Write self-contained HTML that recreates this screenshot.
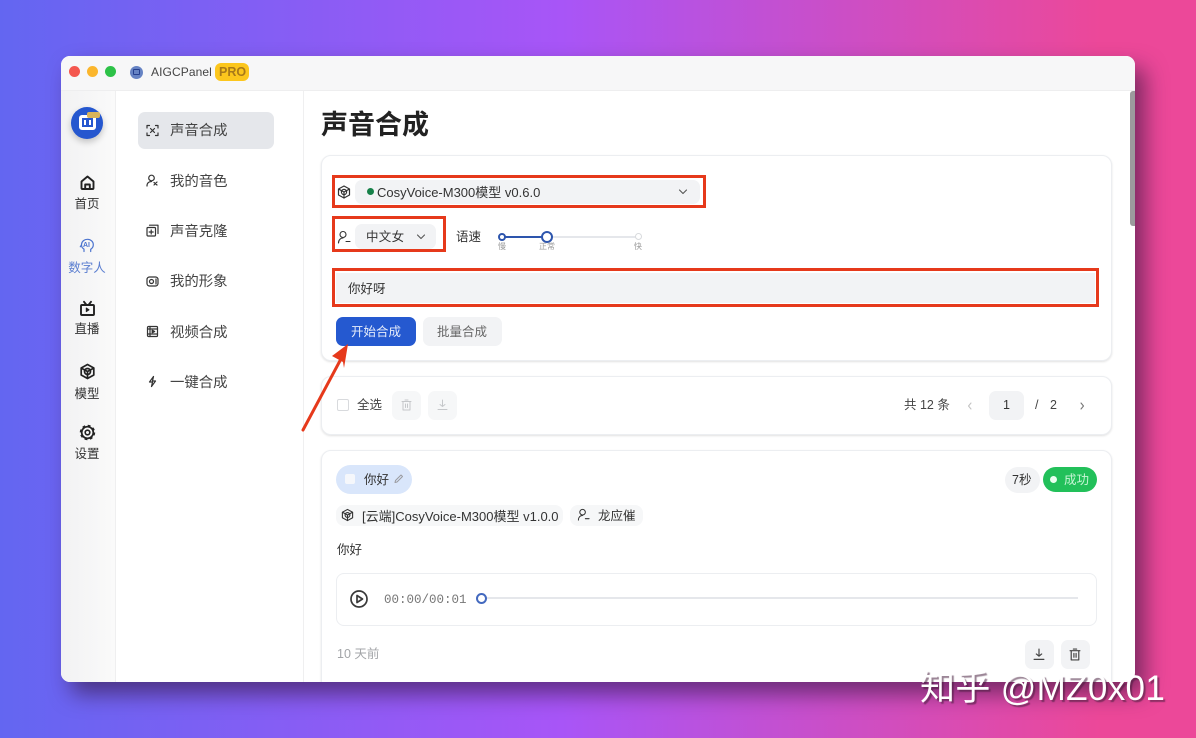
<!DOCTYPE html>
<html lang="zh">
<head>
<meta charset="utf-8">
<style>
*{box-sizing:border-box;margin:0;padding:0}
html,body{width:1196px;height:738px;overflow:hidden}
body{position:relative;background:linear-gradient(90deg,#6366f1 0%,#a855f7 47%,#ec4899 92%,#ec4899 100%);font-family:"Liberation Sans","Noto Sans CJK SC",sans-serif;color:#333}
.a{position:absolute}
.t{position:absolute;white-space:nowrap;line-height:1}
#win{left:61px;top:56px;width:1074px;height:626px;background:#fff;border-radius:9px;box-shadow:10px 12px 22px rgba(50,20,60,.6)}
#stage{left:0;top:0;width:1196px;height:738px;clip-path:inset(56px 61px 56px 61px round 9px)}
.card{position:absolute;background:#fff;border:1px solid #eceef1;border-radius:10px;box-shadow:0 1px 2px rgba(0,0,0,.12)}
.ic{position:absolute;fill:none;stroke:#333;stroke-width:1.5;stroke-linecap:round;stroke-linejoin:round}
.nav{font-size:12.5px;color:#333;text-align:center;width:55px;left:60px}
.menu{font-size:14.4px;color:#444;left:170px}
.rb{position:absolute;border:3.5px solid #e6391b;background:transparent}
.g{position:absolute;background:#f2f3f5;border-radius:7px}
</style>
</head>
<body>
<div class="a" id="win"></div>
<div class="a" id="stage">

<!-- title bar -->
<div class="a" style="left:61px;top:56px;width:1074px;height:35px;background:#f7f7f8;border-bottom:1px solid #eeeeef"></div>
<div class="a" style="left:69px;top:66px;width:11px;height:11px;border-radius:50%;background:#f4574f"></div>
<div class="a" style="left:87px;top:66px;width:11px;height:11px;border-radius:50%;background:#fbb62d"></div>
<div class="a" style="left:105px;top:66px;width:11px;height:11px;border-radius:50%;background:#2dc248"></div>
<div class="a" style="left:130px;top:66px;width:13px;height:13px;border-radius:50%;background:#6683c4"></div>
<div class="a" style="left:133px;top:69px;width:7px;height:6px;border-radius:1px;border:1px solid #26408f"></div>
<div class="t" style="left:151px;top:66px;font-size:12px;color:#444;letter-spacing:.1px">AIGCPanel</div>
<div class="a" style="left:215px;top:63px;width:34px;height:18px;border-radius:6px;background:#fcc61d"></div>
<div class="t" style="left:219px;top:66px;font-size:12.5px;font-weight:bold;color:#a8791a">PRO</div>

<!-- left rail -->
<div class="a" style="left:61px;top:91px;width:55px;height:591px;background:linear-gradient(90deg,#f2f2f3,#fafafa);border-right:1px solid #efeff0"></div>
<div class="a" style="left:71px;top:107px;width:32px;height:32px;border-radius:50%;background:#2557cf;box-shadow:0 3px 7px rgba(0,0,0,.22)"></div>
<div class="a" style="left:79px;top:115px;width:17px;height:15px;border-radius:3px;border:3px solid #fff"></div>
<div class="a" style="left:84px;top:120px;width:2px;height:5px;background:#fff"></div>
<div class="a" style="left:89px;top:120px;width:2px;height:5px;background:#fff"></div>
<div class="a" style="left:87px;top:112px;width:13px;height:6px;border-radius:2px;background:#d9b45a"></div>

<svg class="ic" style="left:79px;top:174px;stroke-width:1.9;stroke:#222" width="17" height="17" viewBox="0 0 17 17"><path d="M2.500 7.500 8.500 2.500l6 5V14a1 1 0 0 1-1 1h-10a1 1 0 0 1-1-1z"/><path d="M6.200 15v-4.500h4.600V15"/></svg>
<div class="t nav" style="top:198px;left:59.5px">首页</div>

<svg class="ic" style="left:79px;top:237px;stroke:#4c74cf;stroke-width:1.2" width="17" height="17" viewBox="0 0 17 17"><path d="M5 14.500v-2.400C3.200 11 2.300 9.300 2.500 7.300 2.900 4.200 5.400 2.300 8.500 2.300c3.200 0 5.800 2.300 5.800 5.500 0 2.100-1 3.500-2.600 4.500v2.200"/><path d="M2.500 8 1.300 9.700"/></svg>
<div class="t" style="left:83px;top:242px;font-size:7px;font-weight:bold;color:#4c74cf">AI</div>
<div class="t nav" style="top:262px;color:#5b7ed0;left:59.5px">数字人</div>

<svg class="ic" style="left:79px;top:300px;stroke-width:1.9;stroke:#222" width="17" height="17" viewBox="0 0 17 17"><rect x="2" y="5" width="13" height="10" rx="1"/><path d="M5 1.800 7.500 5M12 1.800 9.500 5"/><path d="M7.300 8l2.700 1.800-2.700 1.800z" fill="#222" stroke-width="1"/></svg>
<div class="t nav" style="top:323px;left:59.5px">直播</div>

<svg class="ic" style="left:79px;top:363px;stroke-width:1.7;stroke:#222" width="17" height="17" viewBox="0 0 17 17"><path d="M8.500 1.500 14.800 5v7l-6.300 3.500L2.200 12V5z"/><path d="M8.500 8.500V15.300M8.500 8.500 2.500 5.200M8.500 8.500l6-3.300"/><circle cx="8.500" cy="8.500" r="3"/></svg>
<div class="t nav" style="top:388px;left:59.5px">模型</div>

<svg class="ic" style="left:79px;top:424px;stroke:#222" width="17" height="17" viewBox="0 0 17 17"><circle cx="8.500" cy="8.500" r="5.800" stroke-width="1.7"/><circle cx="8.500" cy="8.500" r="6.800" stroke-width="1.800" stroke-dasharray="2.800 2.540" stroke-linecap="butt"/><circle cx="8.500" cy="8.500" r="2.300" stroke-width="1.600"/></svg>
<div class="t nav" style="top:448px;left:59.5px">设置</div>

<!-- second menu -->
<div class="a" style="left:116px;top:91px;width:188px;height:591px;background:#fff;border-right:1px solid #efeff0"></div>
<div class="a" style="left:138px;top:112px;width:136px;height:37px;border-radius:7px;background:#e5e7eb"></div>

<svg class="ic" style="left:146px;top:124px;stroke-width:1.2" width="13" height="13" viewBox="0 0 13 13"><path d="M1 4V1.500h2.500M9.500 1.500H12V4M12 9v2.500H9.500M3.500 11.500H1V9"/><path d="M4.500 4.500l4 4M8.500 4.500l-4 4"/></svg>
<div class="t menu" style="top:124px">声音合成</div>

<svg class="ic" style="left:146px;top:174px;stroke-width:1.2" width="13" height="13" viewBox="0 0 13 13"><circle cx="5.500" cy="4" r="2.800"/><path d="M1 12c0-3 2-4.500 4.500-4.500"/><path d="M8 11l3-3M8 8.500l3 2.500"/></svg>
<div class="t menu" style="top:175px">我的音色</div>

<svg class="ic" style="left:146px;top:224px;stroke-width:1.2" width="13" height="13" viewBox="0 0 13 13"><rect x="1" y="3.500" width="8.500" height="8.500" rx="1"/><path d="M3.500 1.200H12v8.300M5.200 6v4M3.200 8h4"/></svg>
<div class="t menu" style="top:225px">声音克隆</div>

<svg class="ic" style="left:146px;top:275px;stroke-width:1.2" width="13" height="13" viewBox="0 0 13 13"><rect x="1" y="2" width="11" height="9" rx="2.500"/><circle cx="5.500" cy="6.500" r="2"/><path d="M10 4v5"/></svg>
<div class="t menu" style="top:275px">我的形象</div>

<svg class="ic" style="left:146px;top:325px;stroke-width:1.2" width="13" height="13" viewBox="0 0 13 13"><rect x="1.500" y="1.500" width="10" height="10" rx="1"/><path d="M1.500 4h10M1.500 9h10M4 1.500V11.500"/><path d="M6.200 5.200l2.500 1.300-2.500 1.300z" fill="#333"/></svg>
<div class="t menu" style="top:326px">视频合成</div>

<svg class="ic" style="left:146px;top:375px;stroke-width:1.2" width="13" height="13" viewBox="0 0 13 13"><path d="M7.500 1.500 3.500 7h3l-1 4.500L9.500 6h-3z"/></svg>
<div class="t menu" style="top:376px">一键合成</div>

<!-- heading -->
<div class="t" style="left:321px;top:112px;font-size:27px;font-weight:bold;color:#222">声音合成</div>

<!-- form card -->
<div class="card" style="left:321px;top:155px;width:791px;height:206px"></div>
<svg class="ic" style="left:337px;top:185px;stroke-width:1.2" width="14" height="14" viewBox="0 0 14 14"><path d="M7 1l5.500 3v6L7 13 1.500 10V4z"/><path d="M7 7v6M7 7 1.800 4.200M7 7l5.200-2.800"/><circle cx="7" cy="7" r="2.600"/></svg>
<div class="g" style="left:355px;top:180px;width:345px;height:24px"></div>
<div class="a" style="left:367px;top:188px;width:7px;height:7px;border-radius:50%;background:#168149"></div>
<div class="t" style="left:377px;top:186px;font-size:13px;color:#333">CosyVoice-M300模型 v0.6.0</div>
<svg class="ic" style="left:677px;top:188px;stroke:#555;stroke-width:1.1" width="12" height="8" viewBox="0 0 12 8"><path d="M2.500 2l3.500 3.500L9.500 2"/></svg>
<div class="rb" style="left:332px;top:175px;width:374px;height:33px"></div>

<svg class="ic" style="left:337px;top:230px;stroke-width:1.1" width="14" height="14" viewBox="0 0 14 14"><circle cx="6" cy="4.500" r="3"/><path d="M1.500 13c0-3 2-5 4.500-5"/><path d="M9 11.500h4"/></svg>
<div class="g" style="left:355px;top:224px;width:81px;height:25px"></div>
<div class="t" style="left:366px;top:231px;font-size:12.5px;color:#333;letter-spacing:.3px">中文女</div>
<svg class="ic" style="left:415px;top:233px;stroke:#555;stroke-width:1.1" width="12" height="8" viewBox="0 0 12 8"><path d="M2.500 2l3.500 3.500L9.500 2"/></svg>
<div class="rb" style="left:332px;top:216px;width:114px;height:36px"></div>
<div class="t" style="left:456px;top:231px;font-size:12.5px;color:#333">语速</div>

<div class="a" style="left:500px;top:236px;width:140px;height:2px;background:#e5e7eb"></div>
<div class="a" style="left:502px;top:236px;width:45px;height:2px;background:#2d55ad"></div>
<div class="a" style="left:498px;top:233px;width:8px;height:8px;border-radius:50%;background:#fff;border:2px solid #2d55ad"></div>
<div class="a" style="left:541px;top:231px;width:12px;height:12px;border-radius:50%;background:#fff;border:2px solid #2d55ad"></div>
<div class="a" style="left:635px;top:233px;width:7px;height:7px;border-radius:50%;background:#fff;border:1px solid #d8dadd"></div>
<div class="t" style="left:498px;top:243px;font-size:8px;color:#999">慢</div>
<div class="t" style="left:539px;top:243px;font-size:8px;color:#999">正常</div>
<div class="t" style="left:634px;top:243px;font-size:8px;color:#999">快</div>

<div class="a" style="left:336px;top:273px;width:759px;height:30px;background:#f2f3f5"></div>
<div class="t" style="left:348px;top:283px;font-size:12.5px;color:#333">你好呀</div>
<div class="rb" style="left:332px;top:268px;width:767px;height:39px"></div>

<div class="a" style="left:336px;top:317px;width:80px;height:29px;border-radius:7px;background:#2559d0"></div>
<div class="t" style="left:351px;top:326px;font-size:12.5px;color:#e6ecfa">开始合成</div>
<div class="g" style="left:423px;top:317px;width:79px;height:29px"></div>
<div class="t" style="left:437px;top:326px;font-size:12.5px;color:#666">批量合成</div>

<!-- toolbar card -->
<div class="card" style="left:321px;top:376px;width:791px;height:59px"></div>
<div class="a" style="left:337px;top:399px;width:12px;height:12px;border:1px solid #d8dadd;border-radius:2px;background:#fff"></div>
<div class="t" style="left:357px;top:399px;font-size:12.5px;color:#444">全选</div>
<div class="g" style="left:392px;top:391px;width:29px;height:29px;background:#f6f7f8"></div>
<svg class="ic" style="left:401px;top:399px;stroke:#c5c7ca;stroke-width:1" width="11" height="12" viewBox="0 0 11 12"><path d="M1 2.500h9M2 2.500V11h7V2.500M4 1h3M4.500 5v3.500M6.500 5v3.500"/></svg>
<div class="g" style="left:428px;top:391px;width:29px;height:29px;background:#f6f7f8"></div>
<svg class="ic" style="left:437px;top:399px;stroke:#c5c7ca;stroke-width:1" width="11" height="12" viewBox="0 0 11 12"><path d="M5.500 1v6.500M3 5.500l2.500 2 2.500-2M1 10.500h9"/></svg>
<div class="t" style="left:904px;top:399px;font-size:12.5px;color:#444">共 12 条</div>
<svg class="ic" style="left:966px;top:401px;stroke:#c4c4c4;stroke-width:1.1" width="8" height="10" viewBox="0 0 8 10"><path d="M5 2 2.500 5 5 8"/></svg>
<div class="g" style="left:989px;top:391px;width:35px;height:29px"></div>
<div class="t" style="left:1003px;top:399px;font-size:12.5px;color:#333">1</div>
<div class="t" style="left:1035px;top:399px;font-size:12.5px;color:#444">/</div>
<div class="t" style="left:1050px;top:399px;font-size:12.5px;color:#444">2</div>
<svg class="ic" style="left:1078px;top:401px;stroke:#777;stroke-width:1.1" width="8" height="10" viewBox="0 0 8 10"><path d="M3 2l2.500 3L3 8"/></svg>

<!-- record card -->
<div class="card" style="left:321px;top:450px;width:791px;height:260px"></div>
<div class="a" style="left:336px;top:465px;width:76px;height:29px;border-radius:15px;background:#d9e6fb"></div>
<div class="a" style="left:345px;top:474px;width:10px;height:10px;border-radius:2px;background:#f5f7fb"></div>
<div class="t" style="left:364px;top:474px;font-size:12.5px;color:#333">你好</div>
<svg class="ic" style="left:393px;top:473px;stroke:#9a9a9f;stroke-width:1" width="11" height="12" viewBox="0 0 11 12"><path d="M2 9.500l.5-2L8 2l1.500 1.500L4 9z"/></svg>

<div class="a" style="left:1005px;top:467px;width:35px;height:26px;border-radius:13px;background:#f2f3f5"></div>
<div class="t" style="left:1012px;top:474px;font-size:12.5px;color:#333">7秒</div>
<div class="a" style="left:1043px;top:467px;width:54px;height:25px;border-radius:13px;background:#22c05a"></div>
<div class="a" style="left:1050px;top:476px;width:7px;height:7px;border-radius:50%;background:#eafff0"></div>
<div class="t" style="left:1064px;top:474px;font-size:12.5px;color:#c8f5d6">成功</div>

<div class="g" style="left:336px;top:505px;width:227px;height:21px;border-radius:8px;background:#f6f7f8"></div>
<svg class="ic" style="left:341px;top:508px;stroke-width:1.2" width="13" height="14" viewBox="0 0 14 14"><path d="M7 1l5.500 3v6L7 13 1.500 10V4z"/><path d="M7 7v6M7 7 1.800 4.200M7 7l5.200-2.800"/><circle cx="7" cy="7" r="2.600"/></svg>
<div class="t" style="left:362px;top:510px;font-size:13px;color:#333">[云端]CosyVoice-M300模型 v1.0.0</div>
<div class="g" style="left:570px;top:505px;width:73px;height:21px;border-radius:8px;background:#f6f7f8"></div>
<svg class="ic" style="left:577px;top:508px;stroke-width:1.1" width="13" height="13" viewBox="0 0 14 14"><circle cx="6" cy="4.500" r="3"/><path d="M1.500 13c0-3 2-5 4.500-5"/><path d="M9 11.500h4"/></svg>
<div class="t" style="left:598px;top:510px;font-size:12.5px;color:#333">龙应催</div>

<div class="t" style="left:337px;top:544px;font-size:12.5px;color:#333">你好</div>

<div class="a" style="left:336px;top:573px;width:761px;height:53px;border:1px solid #eceef1;border-radius:8px;background:#fff"></div>
<svg class="ic" style="left:349px;top:589px;stroke:#3a3a3a;stroke-width:1.7" width="20" height="20" viewBox="0 0 20 20"><circle cx="10" cy="10" r="8"/><path d="M8 6.500l5.500 3.500L8 13.500z"/></svg>
<div class="t" style="left:384px;top:594px;font-family:'Liberation Mono',monospace;font-size:12.5px;color:#777">00:00/00:01</div>
<div class="a" style="left:487px;top:597px;width:591px;height:2px;background:#e5e7eb"></div>
<div class="a" style="left:476px;top:593px;width:11px;height:11px;border-radius:50%;background:#fff;border:2px solid #4369bf"></div>

<div class="t" style="left:337px;top:648px;font-size:12.5px;color:#a3a5a8">10 天前</div>
<div class="g" style="left:1025px;top:640px;width:29px;height:29px"></div>
<svg class="ic" style="left:1033px;top:648px;stroke:#444;stroke-width:1.1" width="12" height="13" viewBox="0 0 11 12"><path d="M5.500 1v6.500M3 5.500l2.500 2 2.500-2M1 10.500h9"/></svg>
<div class="g" style="left:1061px;top:640px;width:29px;height:29px"></div>
<svg class="ic" style="left:1069px;top:648px;stroke:#444;stroke-width:1.1" width="12" height="13" viewBox="0 0 11 12"><path d="M1 2.500h9M2 2.500V11h7V2.500M4 1h3M4.500 5v3.500M6.500 5v3.500"/></svg>

<!-- scrollbar -->
<div class="a" style="left:1130px;top:91px;width:5px;height:135px;border-radius:3px 0 0 3px;background:#9c9a9d"></div>

<!-- arrow -->
<svg class="a" style="left:295px;top:335px" width="65" height="100" viewBox="0 0 65 100"><path d="M8 95 47 22" stroke="#e6391b" stroke-width="3" stroke-linecap="round" fill="none"/><path d="M53 9 37 21l11 6 1 6z" fill="#e6391b"/></svg>
</div>

<!-- watermark -->
<div class="t" style="left:920px;top:671px;font-size:35px;letter-spacing:.35px;color:#fff;text-shadow:2px 2px 1px rgba(70,30,60,.55)">知乎 @MZ0x01</div>
</body>
</html>
